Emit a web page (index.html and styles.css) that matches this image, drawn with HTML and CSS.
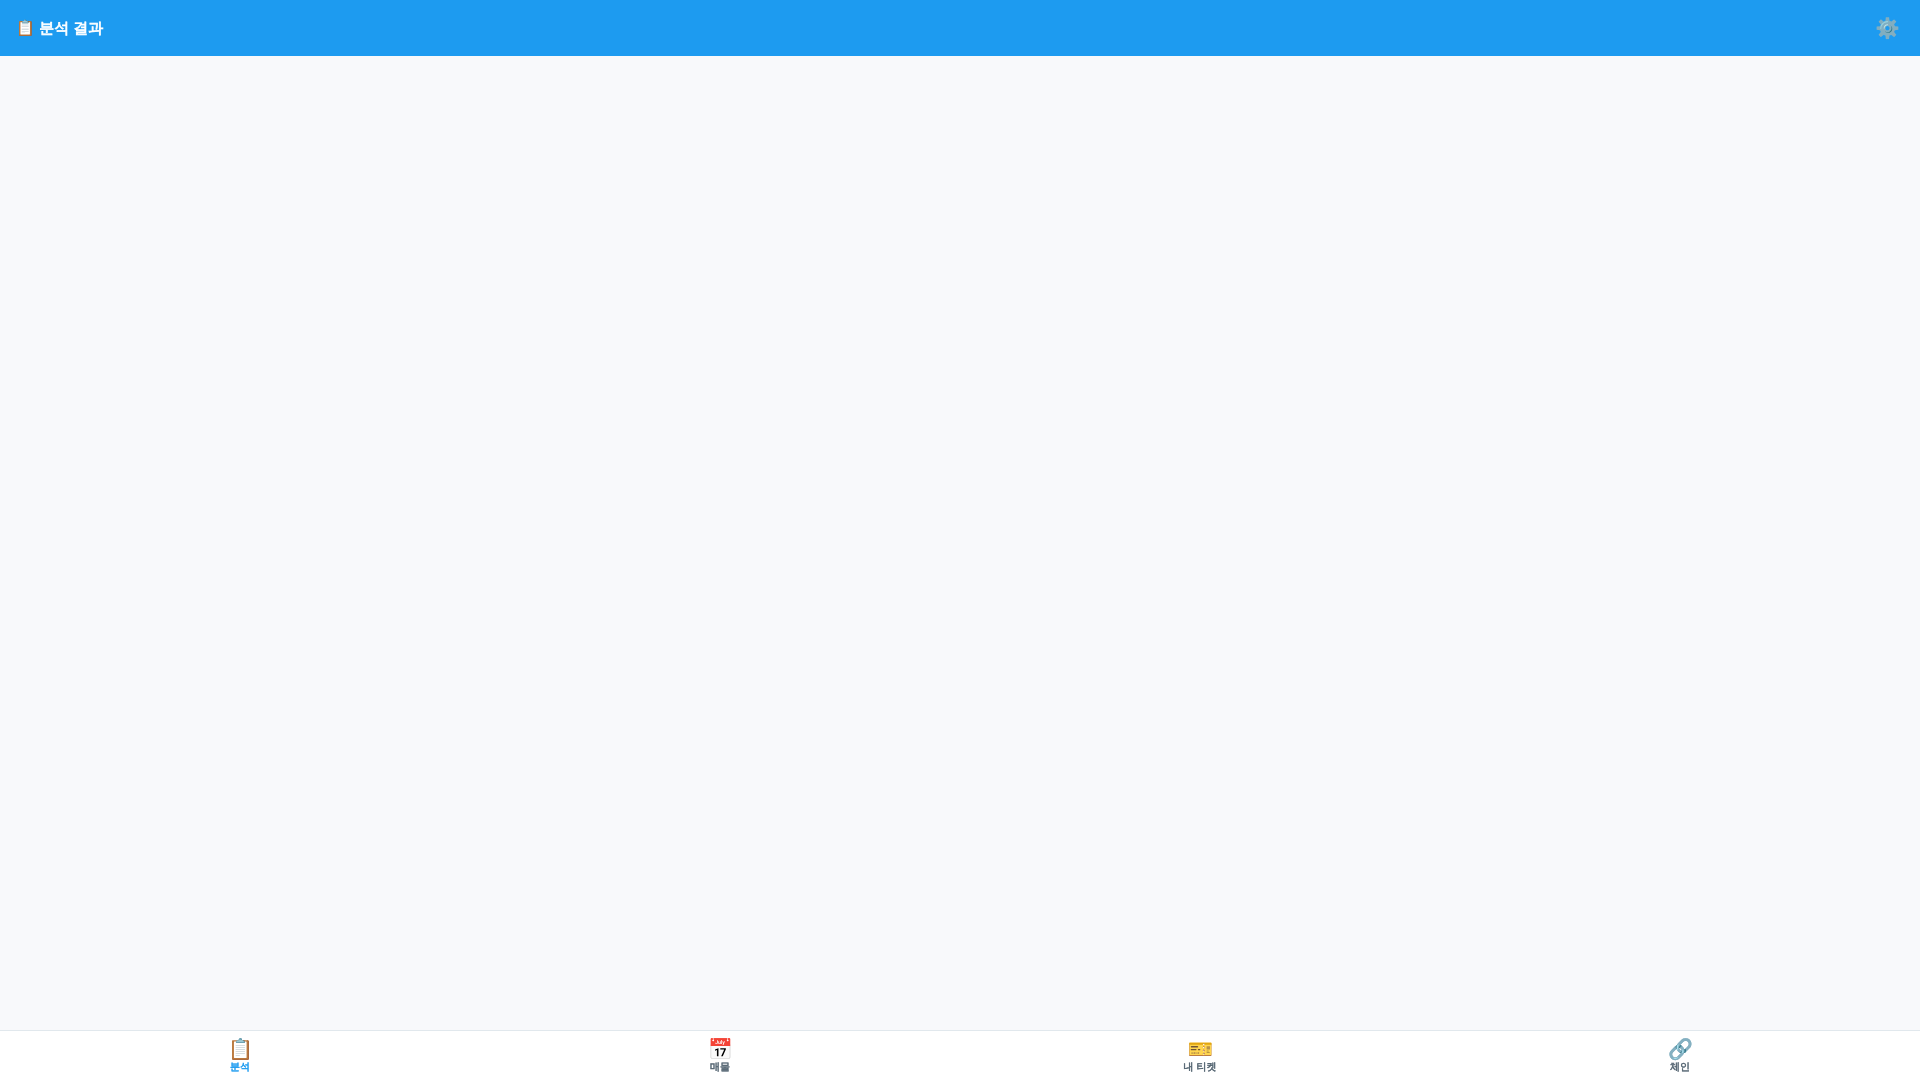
FILE: index.html
```html
<!DOCTYPE html>
<html lang="ko">
<head>
<meta charset="UTF-8">
<meta name="viewport" content="width=device-width, initial-scale=1.0">
<title>분석 결과</title>
<link rel="stylesheet" href="styles.css">
</head>
<body>
<header class="header">
    <h1 class="header-title">📋 분석 결과</h1>
    <button type="button" class="settings-btn" aria-label="설정">⚙️</button>
</header>

<main class="content"></main>

<nav class="bottom-nav">
    <button type="button" class="nav-item active"><span class="nav-icon">📋</span>분석</button>
    <button type="button" class="nav-item"><span class="nav-icon">📅</span>매물</button>
    <button type="button" class="nav-item"><span class="nav-icon">🎫</span>내 티켓</button>
    <button type="button" class="nav-item"><span class="nav-icon">🔗</span>체인</button>
</nav>
</body>
</html>
```
FILE: styles.css
```css
* {
    box-sizing: border-box;
    margin: 0;
    padding: 0;
}
body {
    display: flex;
    flex-direction: column;
    min-height: 100vh;
    font-family: "Liberation Sans", "WenQuanYi Zen Hei", "Noto Sans CJK KR", sans-serif;
    background: #f8f9fb;
    color: #536471;
}
button {
    border: none;
    background: none;
    font-family: inherit;
    color: inherit;
    cursor: pointer;
}
.header {
    display: flex;
    align-items: center;
    justify-content: space-between;
    height: 56px;
    padding: 0 16px;
    background: #1d9bf0;
    color: #fff;
}
/* Zen Hei has no bold face, the stroke thickens it */
.header-title,
.nav-item {
    font-weight: 700;
    -webkit-text-stroke: 0.05em currentColor;
}
.header-title {
    font-size: 15px;
}
.settings-btn {
    padding: 4px;
    font-size: 20px;
}
.content {
    flex: 1;
}
.bottom-nav {
    display: flex;
    height: 50px;
    background: #fff;
    border-top: 1px solid #e1e8ed;
}
.nav-item {
    flex: 1;
    display: flex;
    flex-direction: column;
    align-items: center;
    justify-content: center;
    font-size: 10px;
}
.nav-item.active {
    color: #1d9bf0;
}
.nav-icon {
    font-size: 20px;
    line-height: 22px;
}
```
